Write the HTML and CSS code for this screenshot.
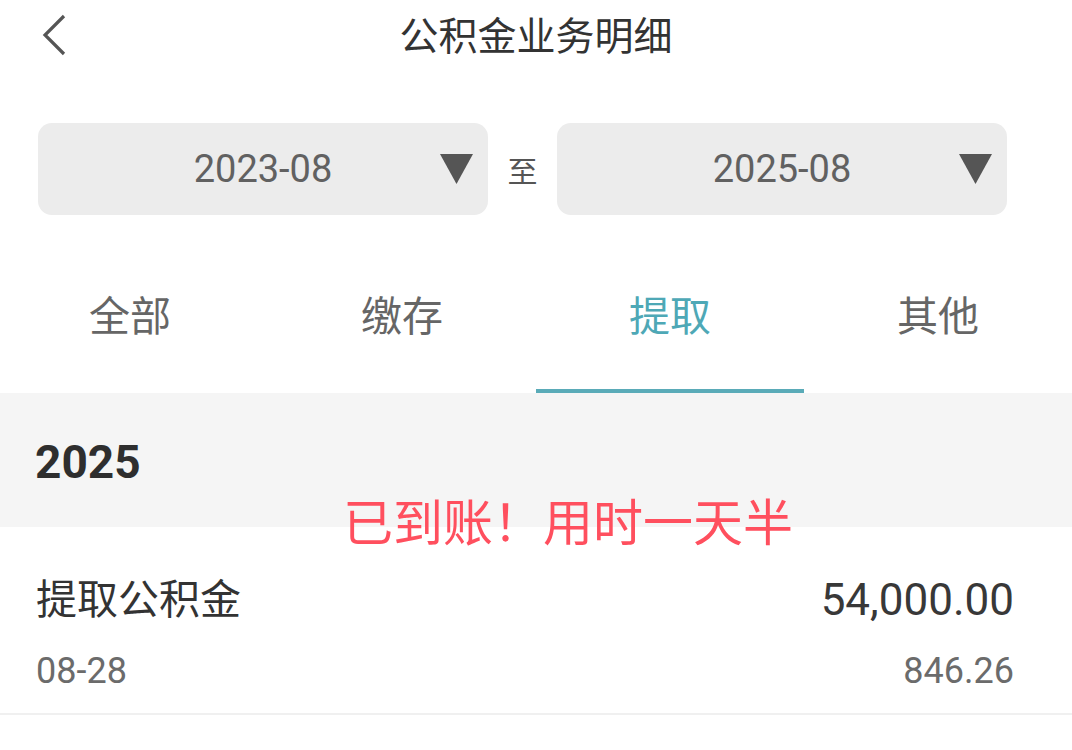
FILE: index.html
```html
<!DOCTYPE html>
<html lang="zh-CN">
<head>
<meta charset="utf-8">
<title>公积金业务明细</title>
<link rel="stylesheet" href="styles.css">
</head>
<body>
<div class="page">
  <header class="topbar">
    <span class="back">
      <svg width="26" height="42" viewBox="0 0 26 42"><polyline points="23,2 4,21 23,40" fill="none" stroke="#555" stroke-width="3.2" stroke-linejoin="miter"/></svg>
    </span>
    <h1 class="title">公积金业务明细</h1>
  </header>

  <div class="dates">
    <div class="datebox">
      <span></span>
      <span class="datetext">2023-08</span>
      <span class="tri"><svg width="33" height="30" viewBox="0 0 33 30"><polygon points="0,0 33,0 16.5,30" fill="#555"/></svg></span>
    </div>
    <div class="to">至</div>
    <div class="datebox">
      <span></span>
      <span class="datetext">2025-08</span>
      <span class="tri"><svg width="33" height="30" viewBox="0 0 33 30"><polygon points="0,0 33,0 16.5,30" fill="#555"/></svg></span>
    </div>
  </div>

  <nav class="tabs">
    <div class="tab">全部</div>
    <div class="tab">缴存</div>
    <div class="tab active">提取</div>
    <div class="tab">其他</div>
  </nav>

  <section class="yearbar">2025</section>

  <div class="record">
    <div class="line">
      <span class="rname">提取公积金</span>
      <span class="ramount">54,000.00</span>
    </div>
    <div class="line sub">
      <span class="rdate">08-28</span>
      <span class="rbal">846.26</span>
    </div>
  </div>

  <div class="note">已到账！用时一天半</div>
</div>
</body>
</html>
```

FILE: styles.css
```css
* { box-sizing: border-box; margin: 0; padding: 0; }
html, body { background: #fff; }
body {
  font-family: Roboto, "Noto Sans CJK SC", sans-serif;
  color: #333;
  width: 1072px;
  height: 750px;
  overflow: hidden;
}
.page { position: relative; width: 1072px; height: 750px; }

.topbar {
  height: 74px;
  display: flex;
  align-items: center;
  justify-content: center;
  position: relative;
}
.back {
  position: absolute;
  left: 41px;
  top: 14px;
  display: flex;
}
.title {
  font-weight: 400;
  font-size: 39px;
  line-height: 48px;
  color: #333;
}

.dates {
  margin-top: 49px;
  padding-left: 38px;
  display: flex;
  align-items: center;
  height: 92px;
}
.datebox {
  width: 450px;
  height: 92px;
  background: #ececec;
  border-radius: 14px;
  display: grid;
  grid-template-columns: 1fr auto 1fr;
  align-items: center;
}
.datetext {
  font-size: 38px;
  color: #616161;
  line-height: 44px;
}
.tri {
  justify-self: end;
  margin-right: 15px;
  display: flex;
}
.to {
  width: 69px;
  text-align: center;
  font-size: 30px;
  color: #555;
}

.tabs {
  display: grid;
  grid-template-columns: repeat(4, 1fr);
  height: 178px;
}
.tab {
  font-size: 41px;
  line-height: 50px;
  color: #666;
  text-align: center;
  padding-top: 77px;
  border-bottom: 4px solid transparent;
}
.tab:first-child { padding-right: 8px; }
.tab.active {
  color: #4ea8b6;
  border-bottom-color: #5aabb8;
}

.yearbar {
  background: #f5f5f5;
  height: 134px;
  padding-left: 35px;
  padding-top: 42px;
  font-size: 46px;
  font-weight: 700;
  line-height: 54px;
  color: #2e2e2e;
}

.record {
  padding: 48px 58px 0 36px;
  height: 188px;
  border-bottom: 2px solid #f0f0f0;
}
.line {
  display: flex;
  justify-content: space-between;
  align-items: center;
}
.rname {
  font-size: 41px;
  line-height: 50px;
  color: #333;
}
.ramount {
  font-size: 44px;
  line-height: 50px;
  color: #383838;
}
.line.sub { margin-top: 25px; }
.rdate, .rbal {
  font-size: 36px;
  line-height: 42px;
  color: #6b6b6b;
}

.note {
  position: absolute;
  left: 343px;
  top: 494px;
  font-size: 50px;
  line-height: 60px;
  color: #ff4f5e;
  white-space: nowrap;
}
```
